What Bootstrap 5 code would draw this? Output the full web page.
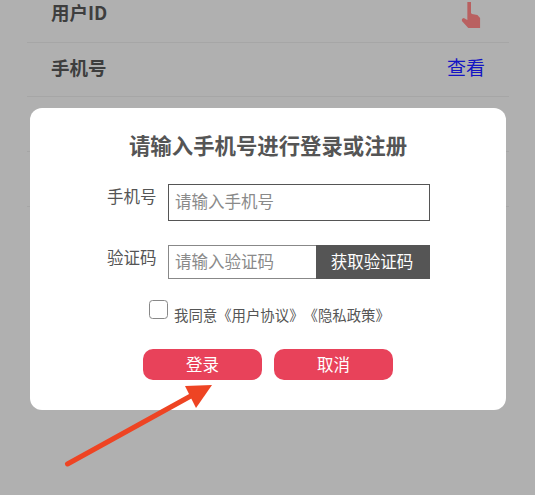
<!DOCTYPE html>
<html lang="zh-CN">
<head>
<meta charset="utf-8">
<link href="https://cdn.jsdelivr.net/npm/bootstrap@5.3.0/dist/css/bootstrap.min.css" rel="stylesheet">
<style>
html,body{height:100%;margin:0;overflow:hidden;background:#b0b0b0;font-family:"Noto Sans CJK SC","Noto Sans",sans-serif;text-spacing-trim:space-all}
.info-list{margin:-12px 26px 0 27px}
.info-row{height:54.7px;border-bottom:1.5px solid #a6a6a6;padding:0 24px 4px;font-size:18.5px;font-weight:700;color:#3e3e3e}
.look{color:#1414c4;font-weight:400;text-decoration:none;font-size:19px}
.hand{width:20px;height:26px;margin:5px 4px 0 0}
.dlg{position:absolute;left:30px;top:108px;width:476px;height:302px;background:#fff;border-radius:12px;color:#555}
.dlg-title{font-size:21.4px;font-weight:700;line-height:28px;margin:23px 0 0;color:#555}
.fld{margin-left:77px;width:323px;font-size:16.5px;gap:12px}
.fld label{width:49px;white-space:nowrap;line-height:24px}
.fld-one{margin-top:25px;align-items:flex-start}
.fld-two{margin-top:24px;align-items:flex-start}
.inp{height:37px;width:262px;border:1.5px solid #555;border-radius:0;padding:0 6px 3px;font-size:16.5px;color:#555;outline:0;background:#fff}
.inp-wrap{width:262px;height:34px;border:1.5px solid #888;border-right:0}
.inp-wrap input{border:0;outline:0;width:147px;padding:0 6px 3px;font-size:16.5px;height:100%;background:#fff}
input::placeholder{color:#8a8a8a;opacity:1}
.get-code{width:114px;height:34px;margin:-1.5px 0;padding:0 2px 2px 0;border:0;border-radius:0;background:#555;color:#fff;font-size:16.5px;line-height:30px}
.get-code:hover{background:#555;color:#fff}
.agree{margin:21px 0 0 119px;gap:6px;font-size:14.4px;line-height:20px;color:#555}
.agree input{width:19px;height:19px;margin:0;border:1.5px solid #888;border-radius:3px;float:none}
.agree span{margin-top:5px}
.acts{margin:24px 0 0 113px;gap:12px}
.act{width:119px;height:31px;padding:0;border:0;border-radius:10px;background:#e8425a;color:#fff;font-size:16.5px;line-height:31px}
.act:hover{background:#e8425a;color:#fff}
.arrow{position:absolute;left:0;top:0;width:535px;height:495px;pointer-events:none}
</style>
</head>
<body>
<div class="info-list">
  <div class="info-row d-flex justify-content-between align-items-center"><span>用户ID</span>
    <svg class="hand" viewBox="0 0 22 26" preserveAspectRatio="none"><path fill="#b96060" d="M7 0h4v11l1 1 6 1 3 3v10H8L1 19v-2l2-1 4 2z"/></svg></div>
  <div class="info-row d-flex justify-content-between align-items-center"><span>手机号</span><a class="look" href="#">查看</a></div>
  <div class="info-row"></div>
  <div class="info-row"></div>
</div>

<div class="dlg">
  <h1 class="dlg-title text-center">请输入手机号进行登录或注册</h1>
  <div class="fld d-flex fld-one"><label>手机号</label><input class="inp" placeholder="请输入手机号"></div>
  <div class="fld d-flex fld-two"><label>验证码</label>
    <div class="inp-wrap d-flex"><input placeholder="请输入验证码"><button class="btn get-code">获取验证码</button></div>
  </div>
  <div class="agree d-flex align-items-start"><input class="form-check-input" type="checkbox"><span>我同意《用户协议》《隐私政策》</span></div>
  <div class="acts d-flex"><button class="btn act">登录</button><button class="btn act">取消</button></div>
</div>

<svg class="arrow" viewBox="0 0 535 495">
  <line x1="67.5" y1="464" x2="198" y2="392" stroke="#ee4423" stroke-width="5" stroke-linecap="round"/>
  <polygon fill="#ee4423" points="185,386 212,385 196,408"/>
</svg>
<script src="https://cdn.jsdelivr.net/npm/bootstrap@5.3.0/dist/js/bootstrap.bundle.min.js"></script>
</body>
</html>
